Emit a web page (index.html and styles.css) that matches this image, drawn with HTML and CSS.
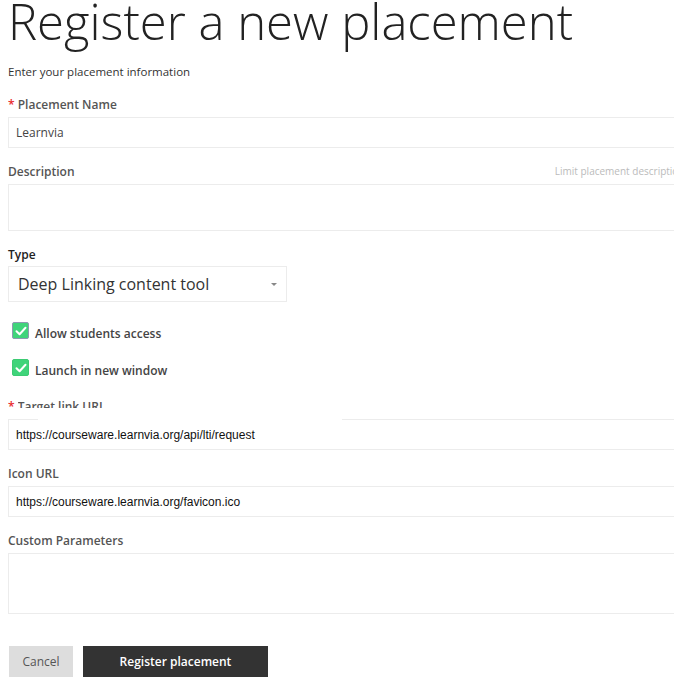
FILE: index.html
```html
<!DOCTYPE html>
<html lang="en">
<head>
    <meta charset="UTF-8">
    <meta name="viewport" content="width=device-width, initial-scale=1.0">
    <title>Register a new placement</title>
    <link rel="stylesheet" href="styles.css">
</head>
<body>

<div class="page">
    <h1 class="title">Register a new placement</h1>
    <p class="intro">Enter your placement information</p>

    <form id="placement-form" class="placement-form">
        <div class="field">
            <label for="name"><span class="req">*</span> Placement Name</label>
            <input type="text" id="name" class="text-input" value="Learnvia">
        </div>

        <div class="field">
            <div class="label-row">
                <label for="description">Description</label>
                <span class="hint">Limit placement description to 255 characters</span>
            </div>
            <textarea id="description" class="text-area short"></textarea>
        </div>

        <div class="field">
            <label for="type" class="dark">Type</label>
            <div class="select-box">
                <span class="select-value">Deep Linking content tool</span>
                <span class="select-arrow"></span>
            </div>
        </div>

        <div class="check-row first">
            <span class="check-box focused">
                <svg width="12" height="10" viewBox="0 0 12 10"><path d="M1.5 5.2 L4.6 8.2 L10.5 1.8" fill="none" stroke="#fff" stroke-width="2" stroke-linecap="round" stroke-linejoin="round"/></svg>
            </span>
            <span class="check-label">Allow students access</span>
        </div>
        <div class="check-row">
            <span class="check-box">
                <svg width="12" height="10" viewBox="0 0 12 10"><path d="M1.5 5.2 L4.6 8.2 L10.5 1.8" fill="none" stroke="#fff" stroke-width="2" stroke-linecap="round" stroke-linejoin="round"/></svg>
            </span>
            <span class="check-label">Launch in new window</span>
        </div>

        <div class="field target">
            <label for="target"><span class="req">*</span> <span class="cut">Target link URL</span></label>
            <div class="patched">
                <input type="text" id="target" class="text-input url" value="https://courseware.learnvia.org/api/lti/request">
                <span class="patch"></span>
            </div>
        </div>

        <div class="field">
            <label for="icon">Icon URL</label>
            <input type="text" id="icon" class="text-input url" value="https://courseware.learnvia.org/favicon.ico">
        </div>

        <div class="field">
            <label for="params">Custom Parameters</label>
            <textarea id="params" class="text-area tall"></textarea>
        </div>

        <div class="actions">
            <button type="button" class="btn cancel">Cancel</button>
            <button type="submit" class="btn primary">Register placement</button>
        </div>
    </form>
</div>

</body>
</html>
```

FILE: styles.css
```css
/* Register placement form */
html {
    overflow: hidden;
}
body {
    margin: 0 0 0 8px;
    font-family: "Open Sans", "Liberation Sans", sans-serif;
    color: #555;
    background-color: #fff;
}
.page {
    width: 760px;
}
.title {
    margin: -3px 0 0 0;
    font-size: 49px;
    font-weight: 300;
    line-height: 49px;
    color: #222;
}
.intro {
    margin: 18px 0 0 0;
    font-size: 11.5px;
    line-height: 15px;
    color: #333;
}
.placement-form {
    margin-top: 17px;
}
.field {
    margin-bottom: 15px;
}
label {
    display: block;
    font-size: 12px;
    font-weight: 600;
    line-height: 17px;
    margin-bottom: 4px;
    color: #555;
}
label.dark {
    color: #222;
}
.req {
    color: #e8262a;
}
.label-row {
    display: flex;
    justify-content: space-between;
    align-items: center;
    height: 17px;
    margin-bottom: 4px;
}
.label-row label {
    margin-bottom: 0;
}
.hint {
    font-size: 10px;
    line-height: 17px;
    color: #bbb;
}
.text-input, .text-area {
    display: block;
    width: 100%;
    box-sizing: border-box;
    border: 1px solid #ececec;
    border-radius: 0;
    padding: 0 7px;
    font-family: "Open Sans", sans-serif;
    font-size: 12px;
    color: #444;
    background-color: #fff;
    outline: none;
    resize: none;
}
.text-input {
    height: 31px;
}
.text-input.url {
    font-family: "Liberation Sans", Arial, sans-serif;
    color: #111;
}
.text-area.short {
    height: 47px;
}
.text-area.tall {
    height: 61px;
}
.select-box {
    display: flex;
    align-items: center;
    justify-content: space-between;
    width: 279px;
    height: 36px;
    margin-top: -1px;
    box-sizing: border-box;
    border: 1px solid #ececec;
    padding: 0 9px 0 9px;
}
.select-value {
    font-size: 16px;
    color: #333;
}
.select-arrow {
    width: 0;
    height: 0;
    border-left: 3px solid transparent;
    border-right: 3px solid transparent;
    border-top: 3px solid #888;
}
.check-row {
    display: flex;
    align-items: flex-start;
    gap: 6px;
    height: 21px;
    margin-left: 4px;
    margin-bottom: 16px;
}
.check-row.first {
    margin-top: 20px;
}
.check-box {
    display: flex;
    align-items: center;
    justify-content: center;
    width: 17px;
    height: 17px;
    box-sizing: border-box;
    border-radius: 2px;
    background-color: #3fd47a;
    border: 1px solid #3ccb73;
}
.check-box.focused {
    border-color: #8d9ab0;
}
.check-label {
    padding-top: 3px;
    font-size: 12px;
    font-weight: 600;
    color: #444;
    line-height: 17px;
}
.field.target {
    margin-top: 18px;
}
.cut {
    display: inline-block;
    height: 10px;
    overflow: hidden;
    vertical-align: top;
}
.patched {
    position: relative;
}
.patch {
    position: absolute;
    left: 30px;
    top: -2px;
    width: 304px;
    height: 3px;
    background-color: #fff;
}
.actions {
    display: flex;
    gap: 10px;
    margin-top: 32px;
    margin-left: 1px;
}
.btn {
    height: 31px;
    border: none;
    border-radius: 0;
    font-family: "Open Sans", sans-serif;
    font-size: 12px;
    cursor: pointer;
}
.btn.cancel {
    width: 64px;
    background-color: #ddd;
    color: #555;
}
.btn.primary {
    width: 185px;
    background-color: #333;
    color: #fff;
    font-weight: 600;
}
```
